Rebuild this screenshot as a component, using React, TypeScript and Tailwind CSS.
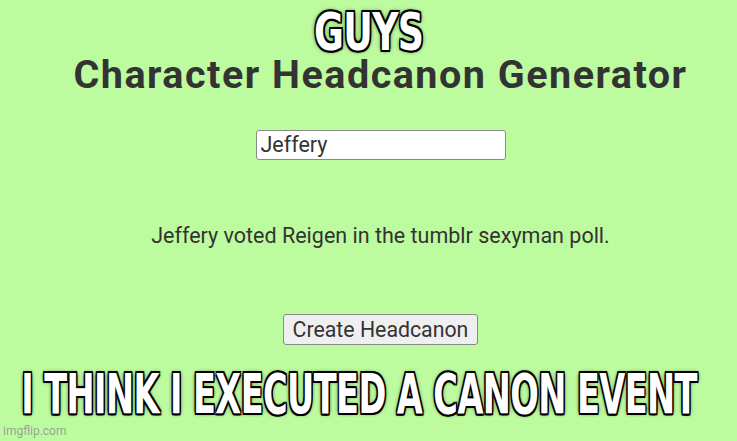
import React from "react";

const memeFont =
  "font-['DejaVu_Sans',sans-serif] font-bold text-white uppercase whitespace-nowrap shrink-0 tracking-[-1px]";

// thick dark outline around caption text
const outline =
  "[text-shadow:2px_2px_0_#000,-2px_-2px_0_#000,2px_-2px_0_#000,-2px_2px_0_#000,0_2px_0_#000,0_-2px_0_#000,2px_0_0_#000,-2px_0_0_#000,0_0_6px_#000]";

export default function App() {
  return (
    <div className="relative w-[737px] h-[441px] overflow-hidden bg-[#bdfb9f] font-['Roboto',sans-serif] text-[#333]">
      <div className="flex flex-col items-center pl-[24px]">
        <h1 className="mt-[49px] text-[39.5px] font-bold leading-[52px] tracking-[1.5px]">
          Character Headcanon Generator
        </h1>
        <input
          readOnly
          value="Jeffery"
          className="mt-[29px] w-[250px] h-[30px] bg-white border border-[#8a8a8a] rounded-[3px] px-[4px] text-[21.5px] text-[#333] outline-none"
        />
        <p className="mt-[62px] text-[21.5px] leading-[28px]">
          Jeffery voted Reigen in the tumblr sexyman poll.
        </p>
        <button className="mt-[64px] h-[31px] px-[9px] bg-[#efefef] border border-[#8a8a8a] rounded-[3px] text-[21.3px] text-[#333] leading-none">
          Create Headcanon
        </button>
      </div>

      {/* caption overlay */}
      <div className="absolute top-[2px] left-0 right-0 flex justify-center">
        <span className={`text-[52px] leading-[60px] scale-x-[0.7] pl-[2px] ${memeFont} ${outline}`}>
          Guys
        </span>
      </div>
      <div className="absolute top-[362px] left-0 right-0 flex justify-center">
        <span className={`text-[56px] leading-[64px] scale-x-[0.6] -translate-x-[9px] ${memeFont} ${outline}`}>
          I think I executed a canon event
        </span>
      </div>
      <div className="absolute left-[3px] bottom-[1px] text-[12px] text-[#9aa39a]">
        imgflip.com
      </div>
    </div>
  );
}
